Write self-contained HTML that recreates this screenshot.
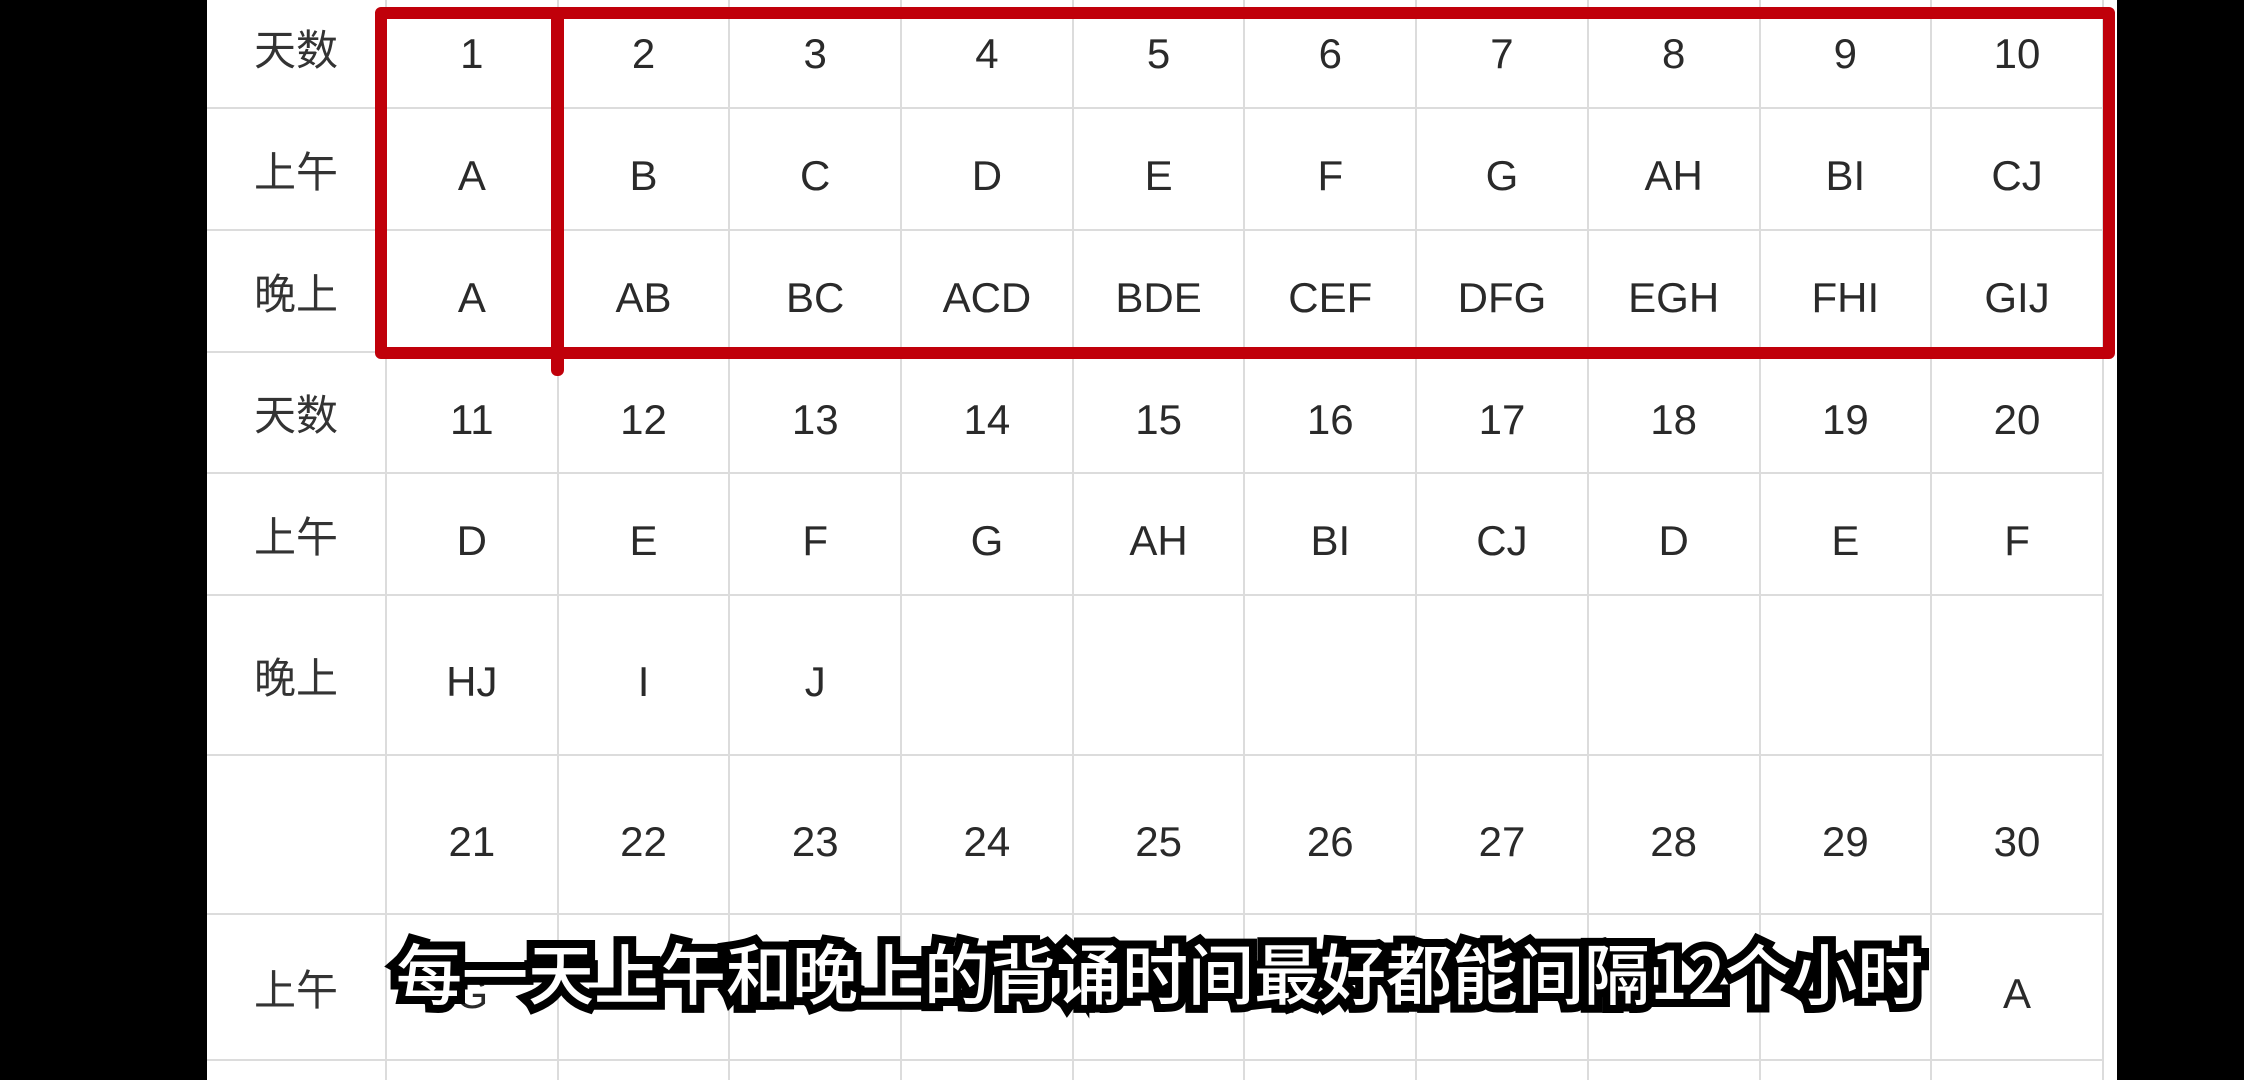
<!DOCTYPE html>
<html><head><meta charset="utf-8"><style>
html,body{margin:0;padding:0;background:#000;width:2244px;height:1080px;overflow:hidden}
#sheet{position:absolute;left:207px;top:0;width:1910px;height:1080px;background:#fff;overflow:hidden}
table{position:absolute;left:0;top:-15px;border-collapse:collapse;table-layout:fixed}
td{border:2px solid #dcdcdc;text-align:center;vertical-align:middle;padding:14px 0 0 0;color:#2a2a2a;font-family:"Liberation Sans","Noto Sans CJK SC",sans-serif;font-size:42px;font-weight:normal}
td.l{font-size:42px;color:#333;border-left:none;padding:0}
.red{position:absolute;border:12px solid #c0000a;border-radius:6px;box-sizing:border-box}
.sub{position:absolute;left:396px;top:926px;width:1540px;font-family:"Noto Sans CJK SC","WenQuanYi Zen Hei",sans-serif;font-size:66px;font-weight:500;color:#fff;-webkit-text-stroke:16px #000;paint-order:stroke fill;white-space:nowrap;line-height:90px}
.wm{position:absolute;left:1950px;top:30px;font-family:"Liberation Sans",sans-serif;font-size:52px;font-weight:bold;color:#ececec}
</style></head><body>
<div id="sheet">
<table>
<colgroup><col style="width:179px"><col span="10" style="width:171.7px"></colgroup>
<tr style="height:122px"><td class="l">天数</td><td>1</td><td>2</td><td>3</td><td>4</td><td>5</td><td>6</td><td>7</td><td>8</td><td>9</td><td>10</td></tr>
<tr style="height:122px"><td class="l">上午</td><td>A</td><td>B</td><td>C</td><td>D</td><td>E</td><td>F</td><td>G</td><td>AH</td><td>BI</td><td>CJ</td></tr>
<tr style="height:122px"><td class="l">晚上</td><td>A</td><td>AB</td><td>BC</td><td>ACD</td><td>BDE</td><td>CEF</td><td>DFG</td><td>EGH</td><td>FHI</td><td>GIJ</td></tr>
<tr style="height:121px"><td class="l">天数</td><td>11</td><td>12</td><td>13</td><td>14</td><td>15</td><td>16</td><td>17</td><td>18</td><td>19</td><td>20</td></tr>
<tr style="height:122px"><td class="l">上午</td><td>D</td><td>E</td><td>F</td><td>G</td><td>AH</td><td>BI</td><td>CJ</td><td>D</td><td>E</td><td>F</td></tr>
<tr style="height:160px"><td class="l">晚上</td><td>HJ</td><td>I</td><td>J</td><td></td><td></td><td></td><td></td><td></td><td></td><td></td></tr>
<tr style="height:159px"><td class="l"></td><td>21</td><td>22</td><td>23</td><td>24</td><td>25</td><td>26</td><td>27</td><td>28</td><td>29</td><td>30</td></tr>
<tr style="height:146px"><td class="l">上午</td><td>G</td><td></td><td></td><td></td><td></td><td></td><td></td><td></td><td></td><td>A</td></tr>
<tr style="height:60px"><td class="l"></td><td></td><td></td><td></td><td></td><td></td><td></td><td></td><td></td><td></td><td></td></tr>
</table>
<div class="wm">bilibili</div>
</div>
<div class="red" style="left:375px;top:7px;width:1740px;height:352px"></div>
<div style="position:absolute;left:551px;top:10px;width:13px;height:366px;background:#c0000a;border-radius:6px"></div>
<div class="sub">每一天上午和晚上的背诵时间最好都能间隔12个小时</div>
</body></html>
